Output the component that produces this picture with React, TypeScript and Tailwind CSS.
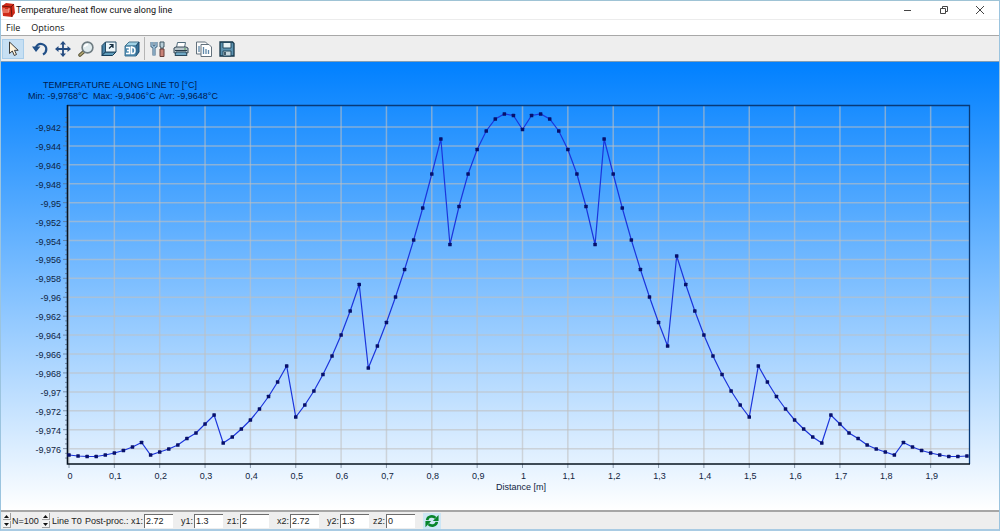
import type { ReactNode } from "react"

// left half of the curve, one sample every 0,02 m, as plot heights
const LEFT_HALF = [
    394, 395, 395.5, 395.5, 394, 392, 389.5, 386, 381.5, 394, 391, 388, 384, 377.5, 372, 363, 354,
    382, 376, 368, 359, 348, 335.5, 321, 305, 356, 344, 330, 313.5, 295, 274, 250, 223.5,
    307, 285, 261.5, 236, 208.5, 179, 147, 113, 78, 183.5, 145.5, 113, 88.5, 70, 58, 53, 54.5,
]
const PEAK = 68.5

const mirrored = LEFT_HALF.slice(1).reverse()
// the right side jumps one sample later than the left one
mirrored[16] = 195

const POINTS = [...LEFT_HALF, PEAK, ...mirrored].map((y, i) => ({ x: 68 + i * 9.07, y }))

const Y_LABELS = [
    "-9,942", "-9,944", "-9,946", "-9,948", "-9,95", "-9,952", "-9,954", "-9,956", "-9,958",
    "-9,96", "-9,962", "-9,964", "-9,966", "-9,968", "-9,97", "-9,972", "-9,974", "-9,976",
]

const X_LABELS = [
    "0", "0,1", "0,2", "0,3", "0,4", "0,5", "0,6", "0,7", "0,8", "0,9",
    "1", "1,1", "1,2", "1,3", "1,4", "1,5", "1,6", "1,7", "1,8", "1,9",
]

const yAt = (i: number) => 66 + i * 18.92
const xAt = (i: number) => 68 + i * 45.35

function Chart() {
    return (
        <svg
            viewBox="0 1 998 448"
            className="block h-auto w-full font-['Liberation_Sans',Arial,sans-serif] text-[9px]"
            role="img"
            aria-label="Temperature along line T0"
        >
            <defs>
                <linearGradient id="sky" x1="0" y1="0" x2="0" y2="1">
                    <stop offset="0" stopColor="#0080ff" />
                    <stop offset="1" stopColor="#ffffff" />
                </linearGradient>
            </defs>
            <rect y="1" width="998" height="448" fill="url(#sky)" />

            <g fill="#001a4d">
                <text x="119" y="27" textAnchor="middle">TEMPERATURE ALONG LINE T0 [°C]</text>
                <text x="27" y="38">Min: -9,9768°C</text>
                <text x="92" y="38">Max: -9,9406°C</text>
                <text x="158" y="38">Avr: -9,9648°C</text>
            </g>

            <g stroke="#c0c0c0" strokeWidth="1.5" strokeOpacity="0.6">
                {Y_LABELS.map((label, i) => (
                    <line key={label} x1="68" x2="968" y1={yAt(i)} y2={yAt(i)} />
                ))}
                {X_LABELS.map((label, i) => (
                    <line key={label} x1={xAt(i)} x2={xAt(i)} y1="45" y2="403" />
                ))}
            </g>

            <g stroke="#5f6f85" strokeWidth="1" strokeOpacity="0.7">
                {Array.from({ length: 73 }, (_, i) => (
                    <line key={i} x1={i % 4 === 2 ? 62 : 64} x2="66" y1={56.5 + i * 4.73} y2={56.5 + i * 4.73} />
                ))}
                {X_LABELS.map((label, i) => (
                    <line key={label} x1={xAt(i)} x2={xAt(i)} y1="403" y2="407" />
                ))}
            </g>

            <path d="M66 44.5H968.5V403" fill="none" stroke="#083a78" strokeWidth="1.3" />
            <path d="M66.5 44V403H969" fill="none" stroke="#07131f" strokeWidth="1.6" />

            <polyline
                points={POINTS.map((p) => `${p.x},${p.y}`).join(" ")}
                fill="none"
                stroke="#1c35dc"
                strokeWidth="1.2"
            />
            <g fill="#07106b">
                {POINTS.map((p) => (
                    <rect key={p.x} x={p.x - 1.75} y={p.y - 1.75} width="3.5" height="3.5" rx="0.6" />
                ))}
            </g>

            <g fill="#10243f">
                {Y_LABELS.map((label, i) => (
                    <text key={label} x="60" y={yAt(i) + 4} textAnchor="end">{label}</text>
                ))}
                {X_LABELS.map((label, i) => (
                    <text key={label} x={xAt(i) + 1} y="418" textAnchor="middle">{label}</text>
                ))}
                <text x="520" y="429" textAnchor="middle">Distance [m]</text>
            </g>
        </svg>
    )
}

function ToolButton({ label, active, children }: { label: string; active?: boolean; children: ReactNode }) {
    return (
        <button
            type="button"
            aria-label={label}
            className={
                active
                    ? "flex h-5 w-[22px] items-center justify-center border border-[#a9cdea] bg-[#c6dff3]"
                    : "flex h-5 w-[23px] items-center justify-center"
            }
        >
            <svg viewBox="0 0 16 16" className="size-4" fill="none">
                {children}
            </svg>
        </button>
    )
}

function Toolbar() {
    return (
        <div className="flex h-[26px] items-center border-t border-[#a8a8a8] bg-[#eeeeee] pl-px">
            <ToolButton label="Select" active>
                <path d="M4.500 1v11.500l2.800-2.500 2 4.500 2.200-1-2-4.200h3.700z" fill="#fff3dc" stroke="#3c3a38" />
            </ToolButton>
            <div className="w-1" />
            <ToolButton label="Undo">
                <path d="M3.500 8.500C3.500 4.500 7 2.200 10.500 3.200c5 1.600 5 7.800 .5 10.300" stroke="#214f87" strokeWidth="2.200" />
                <path d="M0 5.500h8.500L4 11z" fill="#214f87" />
            </ToolButton>
            <ToolButton label="Pan">
                <path d="M8 2v12M2 8h12" stroke="#244b80" strokeWidth="1.800" />
                <path d="M8 0l3 3.500H5zM8 16l3-3.500H5zM0 8l3.500-3v6zM16 8l-3.500-3v6z" fill="#244b80" />
            </ToolButton>
            <ToolButton label="Zoom">
                <path d="M6 10.500L2 14" stroke="#5b5536" strokeWidth="3.600" strokeLinecap="round" />
                <path d="M6 10.500L2 14" stroke="#b3a874" strokeWidth="1.600" strokeLinecap="round" />
                <circle cx="9.500" cy="6.500" r="5.400" fill="#e0ebee" stroke="#6f7c82" strokeWidth="1.600" />
                <path d="M6.500 6c.5-1.800 2-2.500 3.500-2.300" stroke="#fff" strokeWidth="1.600" />
            </ToolButton>
            <ToolButton label="Extents">
                <path d="M1 4.500L4.500 1v10L1 14.500z" fill="#4a83a7" stroke="#173e5a" />
                <path d="M1 14.500L4.500 11H15l-3.500 3.500z" fill="#5f9cba" stroke="#173e5a" />
                <path d="M4.500 1H15v10H4.500z" fill="#edf6fa" stroke="#234a64" />
                <path d="M8 7.500L11.500 4M8.500 3.500H12V7" stroke="#132d40" strokeWidth="1.200" />
            </ToolButton>
            <ToolButton label="3D view">
                <path d="M1 5l4-4h10l-3 4z" fill="#9ed1e6" stroke="#48748c" />
                <path d="M12 5l3-4v10l-3 4z" fill="#34709a" stroke="#1d496a" />
                <path d="M1 5h11v10H1z" fill="#4f8bb2" stroke="#3f7798" />
                <path d="M2 6.500h3.500v6H2M3 9.500h2.500M7.500 6v6.500h1.800c2.200-.5 2.200-5.500 0-6z" stroke="#fff" strokeWidth="1.500" />
            </ToolButton>
            <div className="mx-px h-[23px] w-px bg-[#b5b5b5]" />
            <ToolButton label="Settings">
                <path d="M2 1v4l2 1.500L6 5V1M4 6v8.500" stroke="#365c7c" strokeWidth="3" />
                <path d="M2 1v4l2 1.500L6 5V1M4 6v8.500" stroke="#a6c6dc" strokeWidth="1.400" />
                <path d="M10 1h4v5h-1v2h-2V6h-1z" fill="#b8ced8" stroke="#415865" />
                <path d="M10 8h4v7.500h-4z" fill="#c98378" stroke="#663f3b" />
            </ToolButton>
            <ToolButton label="Print">
                <path d="M4.500 1.500h8l-1 5h-8z" fill="#fff" stroke="#506b7b" />
                <path d="M1 7l2-1h10l2 1v5H1z" fill="#b9c6cc" stroke="#374b58" />
                <path d="M3 11h10l1 3.500H2z" fill="#70a8c4" stroke="#2b485a" />
                <path d="M2 9.500h12" stroke="#273b49" />
                <path d="M11 8h2" stroke="#55a352" />
            </ToolButton>
            <ToolButton label="Copy">
                <path d="M.5 1h9l2 2v10H.5z" fill="#fafafa" stroke="#63717c" />
                <path d="M5 3.500h8l2.500 2.500v9.500H5z" fill="#fff" stroke="#63717c" />
                <path d="M3 5v6M7.500 6v7M10 8v5M12.500 9v4" stroke="#5f88aa" strokeWidth="1.300" />
            </ToolButton>
            <ToolButton label="Save">
                <path d="M1 1h12.500L15 2.500V15H1z" fill="#5c92b0" stroke="#163649" strokeWidth="1.300" />
                <path d="M4 1.500h8V7H4z" fill="#e8f2f5" stroke="#254a60" />
                <path d="M4 10h8v5H4z" fill="#c7d8df" stroke="#254a60" />
                <path d="M6 11v3" stroke="#173345" strokeWidth="1.500" />
            </ToolButton>
        </div>
    )
}

function Spinner({ label }: { label: string }) {
    return (
        <div className="flex w-2 flex-col gap-px">
            <button type="button" aria-label={`Increase ${label}`} className="flex h-[7px] items-center justify-center border-r border-b border-[#a0a0a0] bg-[#f4f4f4]">
                <svg viewBox="0 0 5 3" className="h-[3px] w-[5px]"><path d="M0 3L2.500 0 5 3z" fill="#111" /></svg>
            </button>
            <button type="button" aria-label={`Decrease ${label}`} className="flex h-[7px] items-center justify-center border-r border-b border-[#a0a0a0] bg-[#f4f4f4]">
                <svg viewBox="0 0 5 3" className="h-[3px] w-[5px]"><path d="M0 0h5L2.500 3z" fill="#111" /></svg>
            </button>
        </div>
    )
}

const FIELDS = [
    { id: "x1", value: "2.72", gap: "ml-0" },
    { id: "y1", value: "1.3", gap: "ml-2" },
    { id: "z1", value: "2", gap: "ml-1" },
    { id: "x2", value: "2.72", gap: "ml-2" },
    { id: "y2", value: "1.3", gap: "ml-2" },
    { id: "z2", value: "0", gap: "ml-1" },
]

function StatusBar() {
    return (
        <div className="flex h-[19px] items-center overflow-hidden border-t-2 border-[#a6a6a6] bg-[#eeeeee] pl-[2px] font-['Liberation_Sans',Arial,sans-serif] text-[9px] leading-3 whitespace-nowrap text-[#222]">
            <Spinner label="N" />
            <span className="ml-px w-[30px]">N=100</span>
            <Spinner label="line" />
            <span className="ml-[2px] w-[33px]">Line T0</span>
            <span className="w-[46px]">Post-proc.:</span>
            {FIELDS.map((f) => (
                <div key={f.id} className={`flex items-center ${f.gap}`}>
                    <label htmlFor={f.id} className="w-3">{f.id}:</label>
                    <input
                        id={f.id}
                        defaultValue={f.value}
                        className="ml-px h-[14px] w-[29px] border-t border-l border-[#6d6d6d] bg-white pl-px outline-none"
                    />
                </div>
            ))}
            <button type="button" aria-label="Refresh" className="ml-2 flex h-4 w-[18px] items-center justify-center bg-[#cde6f5]">
                <svg viewBox="0 0 16 16" className="size-[14px]" fill="none">
                    <path d="M2.500 7C3 2.500 9 1.500 12 4.500M13.500 9c-.5 4.500-6.500 5.500-9.500 2.500" stroke="#07852b" strokeWidth="3" />
                    <path d="M15.500 1v7H9zM.5 15V8H7z" fill="#07852b" />
                </svg>
            </button>
        </div>
    )
}

export default function App() {
    return (
        <div className="w-full border-x border-t border-b-2 border-x-[#9bc4df] border-t-[#9fc3d5] border-b-[#a9cbe3] bg-white">
            <header className="flex h-[18px] items-center justify-between">
                <div className="flex items-center">
                    <svg viewBox="0 0 14 14" className="size-[14px]">
                        <path d="M1 3l4-3 8 1 1 9-3 4-9-1z" fill="#cf2a18" />
                        <path d="M1 3l9 1 3-3M10 4l1 10" stroke="#701409" fill="none" />
                        <path d="M3 5v5M5 6v4M7 10V6h2M7 8h1.500" stroke="#ffb39d" fill="none" />
                    </svg>
                    <h1 className="ml-px font-[Roboto,'Noto_Sans',sans-serif] text-[9px] leading-4 whitespace-nowrap text-[#111]">
                        Temperature/heat flow curve along line
                    </h1>
                </div>
                <div className="flex items-center gap-[26px] pr-[14px]">
                    <button type="button" aria-label="Minimize">
                        <svg viewBox="0 0 10 10" className="size-[10px]"><path d="M1 5.500h7" stroke="#444" /></svg>
                    </button>
                    <button type="button" aria-label="Restore">
                        <svg viewBox="0 0 10 10" className="size-[10px]">
                            <path d="M1.500 3.500h5v5h-5zM3.500 3V1.500h5v5H7" fill="none" stroke="#444" />
                        </svg>
                    </button>
                    <button type="button" aria-label="Close">
                        <svg viewBox="0 0 10 10" className="size-[10px]"><path d="M1 1l8 8M9 1L1 9" stroke="#444" /></svg>
                    </button>
                </div>
            </header>
            <nav className="flex h-4 items-center gap-[11px] border-t border-[#ececec] pl-[5px] font-['Open_Sans','Noto_Sans',sans-serif] text-[9px] leading-3 text-[#111]">
                <button type="button">File</button>
                <button type="button">Options</button>
            </nav>
            <Toolbar />
            <main className="border-t border-[#7f9db5]">
                <Chart />
            </main>
            <StatusBar />
        </div>
    )
}
